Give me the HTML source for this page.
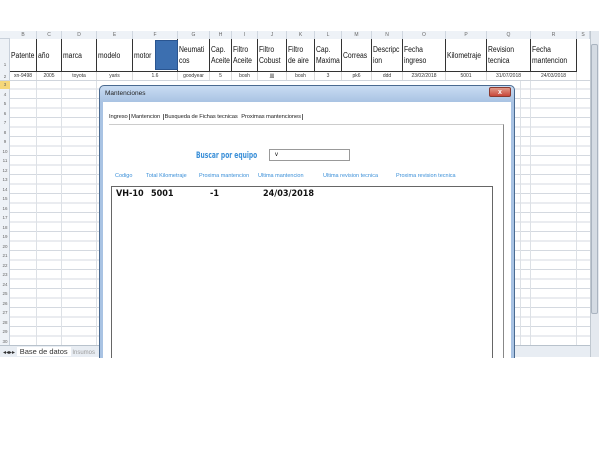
<!DOCTYPE html>
<html><head><meta charset="utf-8"><style>
*{margin:0;padding:0;box-sizing:border-box}
body{width:600px;height:450px;background:#fff;position:relative;overflow:hidden;font-family:"Liberation Sans",sans-serif}
.a{position:absolute}
.ch{position:absolute;top:31px;height:8px;font-size:5px;color:#666;text-align:center;background:#eef2f7;border-right:1px solid #d0d7e0;line-height:8px}
.h1{position:absolute;top:39px;height:33px;border-right:1px solid #333;border-bottom:1px solid #333;font-size:8px;color:#111;padding-left:1px;display:flex;align-items:center;line-height:11px;overflow:hidden;white-space:nowrap}
.h1 span{display:inline-block;transform:scaleX(0.85);transform-origin:left center}
.r2{position:absolute;top:72px;height:8px;font-size:5px;color:#333;text-align:center;line-height:8px;border-right:1px solid #ddd}
.lbl{position:absolute;top:173px;font-size:5.5px;color:#3a8fd8;white-space:nowrap}
.it{position:absolute;top:189px;font-size:9px;font-weight:bold;font-family:"DejaVu Sans Condensed","Liberation Sans",sans-serif;color:#111}
.rn{position:absolute;left:0;width:10px;font-size:4.5px;color:#666;text-align:center;line-height:9.5px}
</style></head><body>
<div class="a" style="left:0;top:80px;width:590px;height:265px;background:
repeating-linear-gradient(to bottom,transparent 0 8.5px,#d4d9e0 8.5px 9.5px)"></div>
<div class="a" style="left:0;top:80px;width:590px;height:265px;background:linear-gradient(to right,transparent 36px,#dde1e6 36px 37px,transparent 37px 61px,#dde1e6 61px 62px,transparent 62px 96px,#dde1e6 96px 97px,transparent 97px 520px,#dde1e6 520px 521px,transparent 521px 530px,#dde1e6 530px 531px,transparent 531px 576px,#dde1e6 576px 577px,transparent 577px)"></div>
<div class="a" style="left:0;top:31px;width:10px;height:314px;background:#eef2f7;border-right:1px solid #c8d0da"></div>
<div class="a" style="left:0;top:31px;width:590px;height:8px;background:#eef2f7;border-bottom:1px solid #c8d0da"></div>
<div class="a" style="left:10px;top:39px;width:580px;height:41px;background:#fff"></div>
<div class="rn" style="top:60px">1</div><div class="rn" style="top:72px">2</div>
<div class="a" style="left:0;top:80px;width:10px;height:9px;background:#f5d77a"></div>
<div class="a" style="left:0;top:80px;width:10px;font-size:4.5px;color:#666;text-align:center;line-height:9.5px">3<br>4<br>5<br>6<br>7<br>8<br>9<br>10<br>11<br>12<br>13<br>14<br>15<br>16<br>17<br>18<br>19<br>20<br>21<br>22<br>23<br>24<br>25<br>26<br>27<br>28<br>29<br>30</div>
<div class="ch" style="left:10px;width:27px">B</div><div class="ch" style="left:37px;width:25px">C</div><div class="ch" style="left:62px;width:35px">D</div><div class="ch" style="left:97px;width:36px">E</div><div class="ch" style="left:133px;width:45px">F</div><div class="ch" style="left:178px;width:32px">G</div><div class="ch" style="left:210px;width:22px">H</div><div class="ch" style="left:232px;width:26px">I</div><div class="ch" style="left:258px;width:29px">J</div><div class="ch" style="left:287px;width:28px">K</div><div class="ch" style="left:315px;width:27px">L</div><div class="ch" style="left:342px;width:30px">M</div><div class="ch" style="left:372px;width:31px">N</div><div class="ch" style="left:403px;width:43px">O</div><div class="ch" style="left:446px;width:41px">P</div><div class="ch" style="left:487px;width:44px">Q</div><div class="ch" style="left:531px;width:46px">R</div><div class="ch" style="left:577px;width:13px">S</div>
<div class="h1" style="left:10px;width:27px"><span>Patente</span></div><div class="h1" style="left:37px;width:25px"><span>año</span></div><div class="h1" style="left:62px;width:35px"><span>marca</span></div><div class="h1" style="left:97px;width:36px"><span>modelo</span></div><div class="h1" style="left:133px;width:45px"><span>motor</span></div>
<div class="a" style="left:155px;top:40px;width:23px;height:30px;background:#3c6fb0;border:1px solid #2a5590"></div>
<div class="h1" style="left:178px;width:32px"><span>Neumati<br>cos</span></div><div class="h1" style="left:210px;width:22px"><span>Cap.<br>Aceite</span></div><div class="h1" style="left:232px;width:26px"><span>Filtro<br>Aceite</span></div><div class="h1" style="left:258px;width:29px"><span>Filtro<br>Cobust</span></div><div class="h1" style="left:287px;width:28px"><span>Filtro<br>de aire</span></div><div class="h1" style="left:315px;width:27px"><span>Cap.<br>Maxima</span></div><div class="h1" style="left:342px;width:30px"><span>Correas</span></div><div class="h1" style="left:372px;width:31px"><span>Descripc<br>ion</span></div><div class="h1" style="left:403px;width:43px"><span>Fecha<br>ingreso</span></div><div class="h1" style="left:446px;width:41px"><span>Kilometraje</span></div><div class="h1" style="left:487px;width:44px"><span>Revision<br>tecnica</span></div><div class="h1" style="left:531px;width:46px"><span>Fecha<br>mantencion</span></div>
<div class="r2" style="left:10px;width:27px">xn-9498</div><div class="r2" style="left:37px;width:25px">2005</div><div class="r2" style="left:62px;width:35px">toyota</div><div class="r2" style="left:97px;width:36px">yaris</div><div class="r2" style="left:133px;width:45px">1.6</div><div class="r2" style="left:178px;width:32px">goodyear</div><div class="r2" style="left:210px;width:22px">5</div><div class="r2" style="left:232px;width:26px">bosh</div><div class="r2" style="left:258px;width:29px">jjjj</div><div class="r2" style="left:287px;width:28px">bosh</div><div class="r2" style="left:315px;width:27px">3</div><div class="r2" style="left:342px;width:30px">pk6</div><div class="r2" style="left:372px;width:31px">ddd</div><div class="r2" style="left:403px;width:43px">23/02/2018</div><div class="r2" style="left:446px;width:41px">5001</div><div class="r2" style="left:487px;width:44px">31/07/2018</div><div class="r2" style="left:531px;width:46px">24/03/2018</div>
<div class="a" style="left:0;top:80px;width:590px;height:1px;background:#d0d5dc"></div>
<div class="a" style="left:0;top:345px;width:100px;height:12px;background:#e8edf3;border-top:1px solid #b8c2cc;font-size:6px;color:#333;line-height:11px;padding-left:3px;white-space:nowrap">◂◂▸▸ <span style="background:#fff;padding:0 3px;font-size:7.5px">Base de datos</span> <span style="color:#999">Insumos</span></div>
<div class="a" style="left:515px;top:345px;width:75px;height:12px;background:#e8edf3;border-top:1px solid #b8c2cc"></div>
<div class="a" style="left:590px;top:31px;width:9px;height:326px;background:#e4e9ef;border-left:1px solid #c0c8d0"></div>
<div class="a" style="left:591px;top:44px;width:7px;height:270px;background:#d4dbe3;border:1px solid #aab4c0;border-radius:2px"></div>
<!-- dialog -->
<div class="a" style="left:99px;top:85px;width:416px;height:273px;background:linear-gradient(#c9dcf2,#a9c3e3 16px,#a9c3e3);border:1px solid #4a6a90;border-bottom:none;border-radius:5px 5px 0 0"></div>
<div class="a" style="left:105px;top:90px;font-size:6.5px;color:#222">Mantenciones</div>
<div class="a" style="left:489px;top:87px;width:22px;height:10px;background:linear-gradient(#e09a8a,#c8473a);border:1px solid #8a3a30;border-radius:2px;color:#fff;font-size:7px;text-align:center;line-height:9px;font-weight:bold">x</div>
<div class="a" style="left:103px;top:102px;width:408px;height:256px;background:#fff"></div>
<div class="a" style="left:109px;top:114px;font-size:5.8px;color:#222;white-space:nowrap;letter-spacing:-0.1px">Ingreso <span style="border-left:1px solid #666;padding:0 1px"> Mantencion </span><span style="border-left:1px solid #666;padding:0 1px"> Busqueda de Fichas tecnicas </span><span style="padding:0 1px"> Proximas mantenciones </span><span style="border-left:1px solid #666"></span></div>
<div class="a" style="left:109px;top:124px;width:395px;height:234px;border-top:1px solid #ccc;border-right:1px solid #888"></div>
<div class="a" style="left:196px;top:151px;font-size:8.5px;font-weight:bold;color:#3a8fd8;font-family:'DejaVu Sans Condensed','Liberation Sans',sans-serif;transform:scaleX(0.78);transform-origin:left top;white-space:nowrap">Buscar por equipo</div>
<div class="a" style="left:269px;top:149px;width:81px;height:12px;border:1px solid #999;font-size:6px;padding:2px 0 0 5px">v</div>
<div class="lbl" style="left:115px">Codigo</div><div class="lbl" style="left:146px">Total Kilometraje</div><div class="lbl" style="left:199px">Proxima mantencion</div><div class="lbl" style="left:258px">Ultima mantencion</div><div class="lbl" style="left:323px">Ultima revision tecnica</div><div class="lbl" style="left:396px">Proxima revision tecnica</div>
<div class="a" style="left:111px;top:186px;width:382px;height:172px;border:1px solid #666;border-bottom:none"></div>
<div class="it" style="left:116px">VH-10</div><div class="it" style="left:151px">5001</div><div class="it" style="left:210px">-1</div><div class="it" style="left:263px">24/03/2018</div>
</body></html>
